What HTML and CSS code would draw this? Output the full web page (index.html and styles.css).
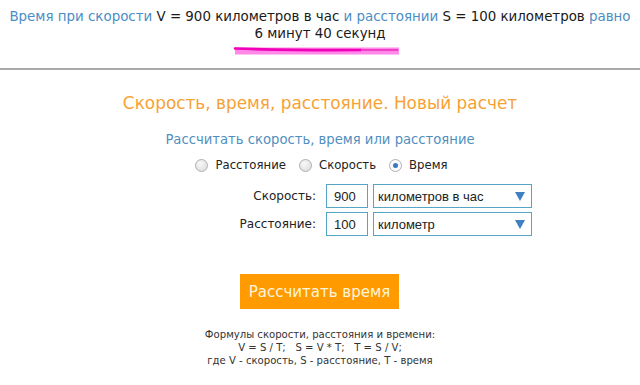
FILE: index.html
```html
<!DOCTYPE html>
<html lang="ru">
<head>
<meta charset="utf-8">
<title>Скорость, время, расстояние</title>
<link rel="stylesheet" href="styles.css">
</head>
<body>
<div class="summary">
  <p class="line"><span class="blue">Время при скорости</span> V = 900 километров в час <span class="blue">и расстоянии</span> S = 100 километров <span class="blue">равно</span></p>
  <p class="line">6 минут 40 секунд</p>
  <div class="mark">
    <svg width="168" height="9" viewBox="0 0 168 9">
      <rect x="2" y="1.5" width="164" height="7" fill="#ff88e8"/>
      <path d="M2 2.5 Q60 4.5 128 4" stroke="#f000b8" stroke-width="2.6" fill="none" stroke-linecap="round"/>
      <path d="M128 4 L165 4" stroke="#f040c8" stroke-width="2" fill="none"/>
    </svg>
  </div>
</div>
<div class="rule"></div>
<div class="calc">
  <h1 class="title">Скорость, время, расстояние. Новый расчет</h1>
  <h2 class="subtitle">Рассчитать скорость, время или расстояние</h2>
  <div class="radios">
    <label class="radio"><span class="dot"></span>Расстояние</label>
    <label class="radio"><span class="dot"></span>Скорость</label>
    <label class="radio"><span class="dot on"></span>Время</label>
  </div>
  <div class="fields">
    <div class="lbl">Скорость:</div>
    <div class="num">900</div>
    <div class="sel">километров в час<span class="arrow"></span></div>
    <div class="lbl">Расстояние:</div>
    <div class="num">100</div>
    <div class="sel">километр<span class="arrow"></span></div>
  </div>
  <div class="btnrow"><button class="btn">Рассчитать время</button></div>
  <div class="formula">
    <div>Формулы скорости, расстояния и времени:</div>
    <div>V = S / T;&nbsp;&nbsp; S = V * T;&nbsp;&nbsp; T = S / V;</div>
    <div>где V - скорость, S - расстояние, T - время</div>
  </div>
</div>
</body>
</html>
```
FILE: styles.css
```css
html, body {
  margin: 0;
  padding: 0;
  background: #ffffff;
  font-family: "DejaVu Sans", Verdana, sans-serif;
  color: #222;
}
.summary {
  text-align: center;
  padding-top: 8px;
  height: 60px;
  box-sizing: border-box;
}
.line {
  margin: 0;
  font-size: 13.4px;
  line-height: 17px;
  color: #1a1a1a;
  white-space: nowrap;
}
.blue { color: #4a8dc4; }
.mark {
  display: flex;
  justify-content: center;
  margin-top: 4px;
  margin-left: -7px;
  height: 9px;
}
.mark svg { display: block; }
.rule {
  height: 2px;
  background: #a9a9a9;
  margin-top: 8px;
}
.calc {
  display: flex;
  flex-direction: column;
  align-items: center;
}
.title {
  margin: 22px 0 0;
  font-size: 16.9px;
  font-weight: normal;
  color: #f7a233;
  line-height: 22px;
}
.subtitle {
  margin: 17px 0 0;
  font-size: 13.2px;
  font-weight: normal;
  color: #4f8fc0;
  line-height: 18px;
}
.radios {
  display: flex;
  gap: 13px;
  margin-top: 9px;
  margin-left: 3px;
  font-size: 11.7px;
  color: #222;
}
.radio {
  display: flex;
  align-items: center;
  gap: 7px;
}
.dot {
  width: 11px;
  height: 11px;
  border-radius: 50%;
  border: 1px solid #b0b0b0;
  background: radial-gradient(circle at 40% 35%, #f8f8f8, #d8d8d8);
  position: relative;
}
.dot.on {
  background: #fafafa;
}
.dot.on::after {
  content: "";
  position: absolute;
  left: 3px;
  top: 3px;
  width: 5px;
  height: 5px;
  border-radius: 50%;
  background: #3a78c6;
}
.fields {
  align-self: flex-start;
  display: grid;
  grid-template-columns: 91px 42px 159px;
  column-gap: 5px;
  row-gap: 4px;
  margin-top: 12px;
  margin-left: 230px;
  font-family: "Liberation Sans", Arial, sans-serif;
  font-size: 13px;
  align-items: center;
}
.lbl {
  font-family: "DejaVu Sans", Verdana, sans-serif;
  font-size: 12px;
  text-align: right;
  color: #222;
  padding-right: 5px;
}
.num, .sel {
  height: 24px;
  box-sizing: border-box;
  border: 1px solid #56a5c6;
  display: flex;
  align-items: center;
  padding-left: 7px;
  color: #222;
}
.sel {
  justify-content: space-between;
  padding-right: 6px;
  padding-left: 4px;
}
.arrow {
  width: 0;
  height: 0;
  border-left: 5px solid transparent;
  border-right: 5px solid transparent;
  border-top: 9px solid #3f7fc2;
}
.btnrow {
  margin-top: 38px;
  display: flex;
  justify-content: center;
  margin-right: 1px;
}
.btn {
  width: 159px;
  height: 35px;
  background: #ff9b00;
  border: none;
  color: #fff6dc;
  font-family: "DejaVu Sans", Verdana, sans-serif;
  font-size: 15px;
  padding: 0;
}
.formula {
  margin-top: 19px;
  text-align: center;
  font-size: 10.1px;
  line-height: 13px;
  color: #333;
}
```
